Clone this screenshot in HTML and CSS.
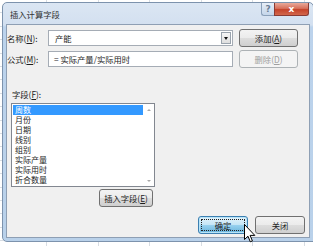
FILE: index.html
```html
<!DOCTYPE html>
<html>
  <head>
    <meta charset="utf8" />
    <title>插入计算字段</title>
    <link rel="stylesheet" href="styles.css">
  </head>
  <body>
    <div class="sheet">
      <div class="window">
        <div class="titlebar">
          <span class="title">插入计算字段</span>
          <div class="caption">
            <span class="cap help">?</span>
            <span class="cap close">x</span>
          </div>
        </div>
        <div class="panel">
          <div class="row first">
            <span class="label">名称(<u>N</u>):</span>
            <div class="combo">
              <span class="value">产能</span>
              <span class="drop"><i></i></span>
            </div>
            <button class="btn">添加(<u>A</u>)</button>
          </div>
          <div class="row second">
            <span class="label">公式(<u>M</u>):</span>
            <div class="field">= 实际产量/实际用时</div>
            <button class="btn" disabled>删除(<u>D</u>)</button>
          </div>
          <div class="fields-label">字段(<u>F</u>):</div>
          <div class="listbox">
            <ul class="items">
              <li class="selected">周数</li>
              <li>月份</li>
              <li>日期</li>
              <li>线别</li>
              <li>组别</li>
              <li>实际产量</li>
              <li>实际用时</li>
              <li>折合数量</li>
            </ul>
            <div class="scroll">
              <i class="up"></i>
              <i class="down"></i>
            </div>
          </div>
          <div class="insert">
            <button class="btn">插入字段(<u>E</u>)</button>
          </div>
          <div class="footer">
            <button class="btn default"><span class="focus">确定</span></button>
            <button class="btn">关闭</button>
          </div>
        </div>
      </div>
      <svg class="cursor" width="12" height="19" viewBox="0 0 12 19">
        <path d="M0.5 0.5 L0.5 15.5 L4 12.2 L6.3 17.8 L8.4 16.9 L6.1 11.4 L10.8 11.4 Z" fill="#fff" stroke="#000" stroke-width="1" stroke-linejoin="round"/>
      </svg>
    </div>
  </body>
</html>
```

FILE: styles.css
```css
html, body {
  margin: 0;
  padding: 0;
}

body {
  width: 313px;
  height: 246px;
  overflow: hidden;
  font-family: "Noto Sans CJK SC", "Liberation Sans", sans-serif;
  font-size: 8.3px;
  color: #1e1e1e;
}

.sheet {
  position: relative;
  width: 313px;
  height: 246px;
  background-color: #fff;
  background-image:
    repeating-linear-gradient(90deg, transparent 0, transparent 46px, #d8dde3 46px, #d8dde3 47px, transparent 47px, transparent 51.6px),
    repeating-linear-gradient(180deg, transparent 0, transparent 12.4px, #d8dde3 12.4px, #d8dde3 13.4px);
  padding-top: 2px;
  box-sizing: border-box;
}

.window {
  margin-left: 2px;
  width: 312px;
  height: 240px;
  box-sizing: border-box;
  border: 1px solid #7d93ad;
  border-radius: 5px 5px 0 5px;
  background: linear-gradient(180deg, #dbe6f3 0, #d3e0f0 22px, #bcd3ec 24px, #b9d1ea 100%);
  padding: 0 3px 3px 3px;
  display: flex;
  flex-direction: column;
}

.titlebar {
  height: 21px;
  display: flex;
  align-items: flex-start;
  justify-content: space-between;
}

.title {
  margin: 6px 0 0 4px;
  line-height: 10px;
  color: #333;
}

.caption {
  display: flex;
  margin-right: 1px;
}

.cap {
  height: 13px;
  line-height: 12px;
  text-align: center;
  box-sizing: border-box;
  font-family: "DejaVu Sans", sans-serif;
  font-weight: bold;
  font-size: 9px;
}

.help {
  width: 13px;
  border: 1px solid #8ba0b9;
  border-top: none;
  border-right: none;
  border-radius: 0 0 0 3px;
  background: linear-gradient(180deg, #e7eef7 0, #d4e1f0 50%, #c5d6ea 100%);
  color: #6a7f96;
}

.close {
  width: 35px;
  border: 1px solid #8a3b34;
  border-top: none;
  border-radius: 0 0 3px 0;
  background: linear-gradient(180deg, #e9a99a 0, #d7715c 45%, #c5432a 55%, #d2674c 100%);
  color: #fff;
}

.panel {
  flex: 1;
  background: #f0f0f0;
  border: 1px solid #8e9fb4;
  display: flex;
  flex-direction: column;
}

.row {
  display: flex;
  align-items: center;
  height: 18px;
}

.row.first {
  margin-top: 4px;
}

.row.second {
  margin-top: 3px;
}

.label {
  width: 41px;
  line-height: 10px;
}

.combo, .field {
  width: 185px;
  height: 16px;
  box-sizing: border-box;
  border: 1px solid #a5acb5;
  background: #fff;
  display: flex;
  align-items: center;
  padding-left: 6px;
  line-height: 10px;
}

.combo .value {
  flex: 1;
}

.drop {
  width: 10px;
  height: 12px;
  margin-right: 1px;
  box-sizing: border-box;
  border: 1px solid #9aa3ad;
  background: linear-gradient(180deg, #f6f6f6, #dedede);
  display: flex;
  align-items: center;
  justify-content: center;
}

.drop i {
  width: 0;
  height: 0;
  border-left: 2.5px solid transparent;
  border-right: 2.5px solid transparent;
  border-top: 3px solid #111;
}

.field {
  padding-left: 5px;
}

.btn {
  height: 18px;
  box-sizing: border-box;
  border: 1px solid #707070;
  border-radius: 3px;
  background: linear-gradient(180deg, #f3f3f3 0, #ebebeb 49%, #dddddd 51%, #cfcfcf 100%);
  font-family: inherit;
  font-size: 8.3px;
  color: #1e1e1e;
  padding: 0;
  line-height: 10px;
}

.row .btn {
  width: 59px;
  margin-left: 6px;
}

.btn:disabled {
  border-color: #adb2b5;
  background: #f4f4f4;
  color: #a0a0a0;
}

.fields-label {
  margin: 21px 0 0 5px;
  line-height: 10px;
}

.listbox {
  margin: 4px 0 0 4px;
  width: 144px;
  height: 84px;
  box-sizing: border-box;
  border: 1px solid #828790;
  background: #fff;
  display: flex;
}

.items {
  list-style: none;
  margin: 0;
  padding: 1px 0 0 1px;
  flex: 1;
}

.items li {
  height: 10px;
  line-height: 10px;
  font-size: 8px;
  padding-left: 2px;
  overflow: hidden;
}

.items li.selected {
  background: #3399ff;
  color: #fff;
}

.scroll {
  width: 11px;
  display: flex;
  flex-direction: column;
  justify-content: space-between;
  align-items: center;
  padding: 5px 0 4px 0;
}

.scroll i {
  width: 0;
  height: 0;
  border-left: 2.5px solid transparent;
  border-right: 2.5px solid transparent;
}

.scroll .up {
  border-bottom: 2px solid #a8a8a8;
}

.scroll .down {
  border-top: 2px solid #a8a8a8;
}

.insert {
  width: 146px;
  display: flex;
  justify-content: flex-end;
  margin-top: 2px;
}

.insert .btn {
  width: 54px;
}

.footer {
  display: flex;
  justify-content: flex-end;
  gap: 7px;
  margin-top: 9px;
  padding-right: 4px;
}

.footer .btn {
  width: 50px;
}

.btn.default {
  border-color: #3c7fb1;
  background: linear-gradient(180deg, #e5f4fc 0, #c4e5f6 49%, #98d1ef 51%, #68b3db 100%);
  box-shadow: inset 0 0 0 1px #b8e4f8;
  padding: 2px;
}

.focus {
  display: flex;
  align-items: center;
  justify-content: center;
  height: 100%;
  border: 1px dotted #222;
  box-sizing: border-box;
}

.cursor {
  position: absolute;
  left: 244px;
  top: 224px;
}
```
